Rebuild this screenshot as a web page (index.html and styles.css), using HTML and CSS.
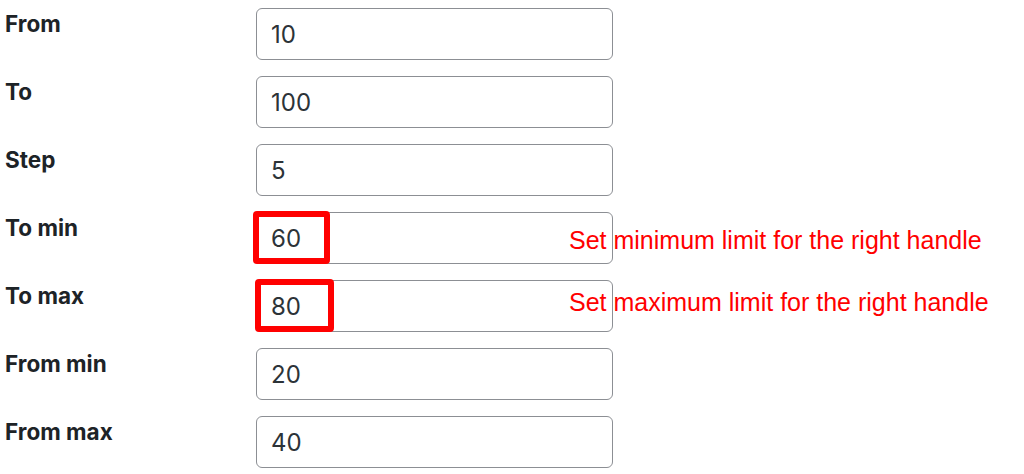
FILE: index.html
```html
<!DOCTYPE html>
<html>
<head>
    <meta charset="utf-8">
    <link rel="stylesheet" href="styles.css">
</head>
<body>
    <form class="settings" name="rangeform">
        <div class="row">
            <label for="from">From</label>
            <div class="field"><input type="text" id="from" value="10"></div>
        </div>
        <div class="row">
            <label for="to">To</label>
            <div class="field"><input type="text" id="to" value="100"></div>
        </div>
        <div class="row">
            <label for="step">Step</label>
            <div class="field"><input type="text" id="step" value="5"></div>
        </div>
        <div class="row">
            <label for="tomin">To min</label>
            <div class="field">
                <input type="text" id="tomin" value="60">
                <span class="mark mark-one"></span>
                <span class="note note-one">Set minimum limit for the right handle</span>
            </div>
        </div>
        <div class="row">
            <label for="tomax">To max</label>
            <div class="field">
                <input type="text" id="tomax" value="80">
                <span class="mark mark-two"></span>
                <span class="note note-two">Set maximum limit for the right handle</span>
            </div>
        </div>
        <div class="row">
            <label for="frommin">From min</label>
            <div class="field"><input type="text" id="frommin" value="20"></div>
        </div>
        <div class="row">
            <label for="frommax">From max</label>
            <div class="field"><input type="text" id="frommax" value="40"></div>
        </div>
    </form>
</body>
</html>
```

FILE: styles.css
```css
body {
    margin: 0; /* no default margin */
    background: #ffffff;
    font-family: Inter, "Open Sans", Arial, sans-serif;
}

.settings {
    padding-top: 8px; /* first input starts a bit below the top */
}

.row {
    display: flex;
    height: 52px;
    margin-bottom: 16px; /* space between rows */
}

.row label {
    width: 256px;
    padding-left: 5px;
    box-sizing: border-box;
    font-size: 22.5px;
    font-weight: 650;
    line-height: 31px;
    color: #1d2327; /* dark label text */
}

.field {
    position: relative;
    width: 357px;
}

.field input {
    width: 100%;
    height: 52px;
    box-sizing: border-box;
    padding: 0 14px;
    border: 1.5px solid #8c8f94; /* grey border */
    border-radius: 6px;
    font-family: Inter, "Open Sans", Arial, sans-serif;
    font-size: 24px;
    color: #2c3338;
    background: #ffffff;
    outline: none;
}

/* red boxes drawn over the values */
.mark {
    position: absolute;
    border: 6px solid #ff0000;
    border-radius: 4px;
    box-sizing: border-box;
}

.mark-one {
    left: -3px;
    top: -1px;
    width: 77px;
    height: 53px;
}

.mark-two {
    left: -1px;
    top: -1px;
    width: 79px;
    height: 53px;
}

/* red notes that sit over the input edge */
.note {
    position: absolute;
    left: 313px;
    white-space: nowrap;
    font-family: "Liberation Sans", Arial, sans-serif;
    font-size: 25px;
    line-height: 28px;
    color: #ff0000;
}

.note-one {
    top: 14px;
}

.note-two {
    top: 8px;
}
```
